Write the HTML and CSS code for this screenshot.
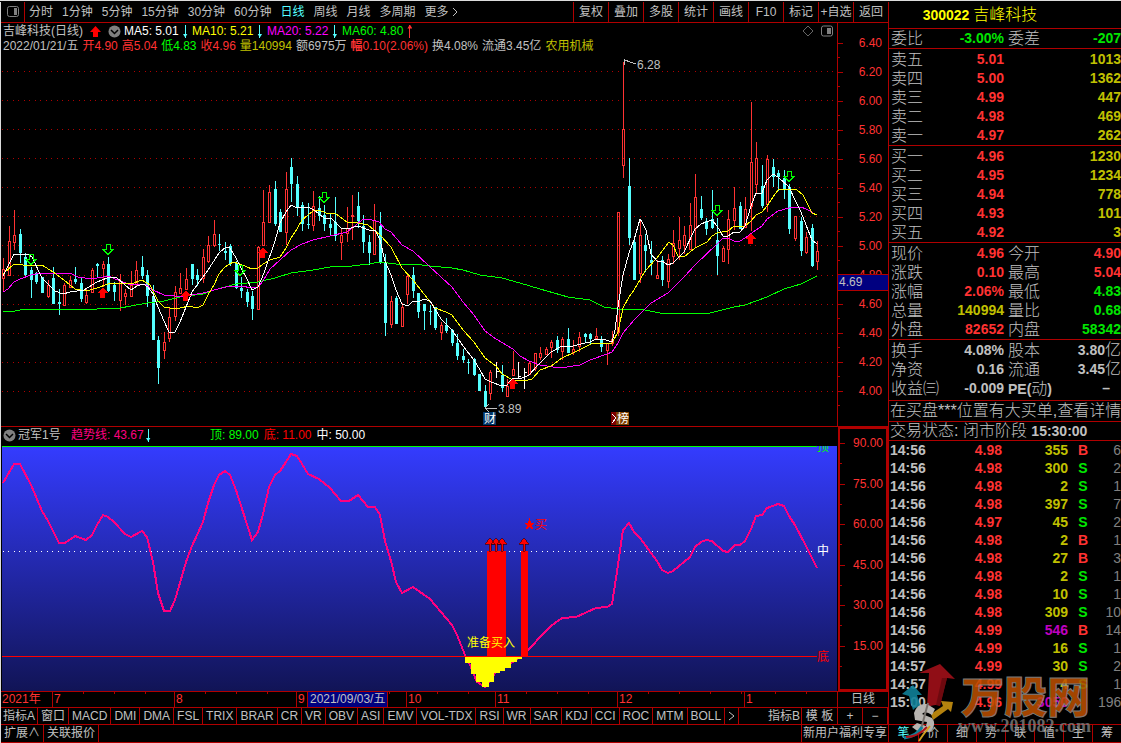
FILE: index.html
```
<!DOCTYPE html>
<html lang="zh-CN">
<head>
<meta charset="utf-8">
<title>300022 吉峰科技</title>
<link rel="stylesheet" href="styles.css">
</head>
<body>
<div class="app">
  <main class="workspace">
    <nav class="toolbar">
      <button class="toolbar-toggle" aria-label="侧栏"><svg width="12" height="12" viewBox="0 0 12 12"><rect x=".5" y=".5" width="11" height="10" rx="2" fill="none" stroke="#808080"/><rect x="7" y="2" width="3" height="7" fill="#808080"/></svg></button>
      <div class="periods">
        <button>分时</button><button>1分钟</button><button>5分钟</button><button>15分钟</button><button>30分钟</button><button>60分钟</button><button class="active">日线</button><button>周线</button><button>月线</button><button>多周期</button><button class="more">更多<svg width="6" height="10" viewBox="0 0 6 10"><path d="M1 1L5 5L1 9" fill="none" stroke="#c0c0c0"/></svg></button>
      </div>
      <div class="tools">
        <button>复权</button><button>叠加</button><button>多股</button><button>统计</button><button>画线</button><button>F10</button><button>标记</button><button>+自选</button><button>返回</button>
      </div>
    </nav>

    <section class="panel">
      <div class="plot">
        <header class="plot-head">
          <div class="ma-row">
            <span class="stock">吉峰科技(日线)</span>
            <svg class="up-mark" width="11" height="11" viewBox="0 0 11 11"><path d="M5.500 0L11 6H8V11H3V6H0Z" fill="#f00"/></svg>
            <svg class="fold" width="13" height="13" viewBox="0 0 13 13"><circle cx="6.500" cy="6.500" r="6" fill="#808080"/><path d="M3 5L6.500 8.500L10 5" fill="none" stroke="#000" stroke-width="1.500"/></svg>
            <span class="ma white">MA5: 5.01<i class="down"></i></span>
            <span class="ma yellow">MA10: 5.21<i class="down"></i></span>
            <span class="ma magenta">MA20: 5.22<i class="down"></i></span>
            <span class="ma lime">MA60: 4.80<i class="up"></i></span>
            <svg class="corner" width="32" height="12" viewBox="0 0 32 12"><path d="M6 1L11 6L6 11L1 6Z" fill="none" stroke="#666"/><rect x="19.500" y="1" width="11" height="10" rx="2" fill="none" stroke="#808080"/><rect x="25" y="3" width="4" height="6" fill="#808080"/></svg>
          </div>
          <div class="day-row">
            <span>2022/01/21/五</span><span class="red">开4.90</span><span class="red">高5.04</span><span class="lime">低4.83</span><span class="red">收4.96</span><span class="olive">量140994</span><span>额6975万</span><span class="red"><b>幅</b>0.10(2.06%)</span><span>换4.08%</span><span>流通3.45亿</span><span class="olive">农用机械</span>
          </div>
        </header>
        <svg class="chart" viewBox="1 54 836 372" role="img" aria-label="日K线">
          <g class="grid"><path d="M2 71.500H837M2 100.500H837M2 129.500H837M2 158.500H837M2 187.500H837M2 216.500H837M2 245.500H837M2 275.500H837M2 304.500H837M2 333.500H837M2 362.500H837M2 391.500H837"/></g>
          <g id="candles"></g>
          <polyline class="line" stroke="#00ff00" points="3,311 15,311 25,309 97,309 108,308 120,308 131,306 147,303 164,301 180,297 203,294 214,290 225,287 236,284 258,282 275,278 291,273 313,270 330,267 352,266 369,264 380,262 396,264 414,264 430,266 452,268 463,270 480,275 502,278 520,283 540,289 568,297 590,300 604,307 618,309 640,309 660,313 685,314 710,313 734,307 745,305 767,297 784,289 801,284 817,276"/>
          <polyline class="line" stroke="#ff00ff" points="3,292 8,289 14,282 20,279 31,275 42,273 53,274 70,273 78,277 92,279 108,276 120,281 131,285 145,284 153,290 164,295 175,296 186,296 203,293 214,290 230,286 241,286 252,288 258,287 263,281 270,269 280,260 291,250 302,244 313,240 330,236 347,232 355,226 362,220 369,219 379,222 385,229 391,232 402,245 413,251 429,266 441,277 452,287 463,302 474,315 485,331 496,339 513,349 520,356 529,361 540,365 560,368 580,365 590,360 607,354 612,352 618,343 623,333 634,320 651,303 668,293 684,277 695,265 717,244 723,238 728,238 734,241 740,241 745,238 756,230 762,226 767,219 778,211 789,208 801,207 806,209 817,215"/>
          <polyline class="line" stroke="#ffff00" points="3,274 14,264 31,266 42,265 53,272 64,280 75,289 86,291 97,288 108,284 120,283 131,284 142,280 150,285 158,301 164,307 170,308 180,308 189,306 197,308 203,305 208,295 214,285 219,274 225,267 233,262 240,264 247,267 252,269 258,268 263,264 270,260 280,257 286,248 291,238 297,229 302,220 313,211 319,210 326,213 336,214 347,222 358,223 368,225 380,235 391,247 402,268 413,280 424,294 435,308 446,312 452,315 463,330 474,342 485,358 496,366 502,374 513,380 524,381 532,379 540,370 551,366 562,358 573,353 585,347 593,343 612,343 618,332 623,308 629,297 634,290 640,280 645,271 657,258 669,242 673,245 678,256 684,257 695,248 707,242 712,236 717,233 728,231 734,226 745,226 751,221 756,215 762,212 767,206 773,197 778,190 784,189 797,190 803,195 808,205 812,213 817,215"/>
          <polyline class="line" stroke="#ffffff" points="3,276 14,254 28,254 32,257 42,278 55,291 63,294 70,292 84,290 97,282 107,278 116,277 125,285 131,290 137,286 143,284 148,287 153,294 158,307 164,321 169,332 175,332 180,322 186,307 192,292 200,281 208,270 219,253 226,247 230,248 236,258 241,268 247,279 252,290 258,287 264,273 275,241 280,223 286,212 291,205 297,208 308,207 314,210 324,218 332,219 341,228 347,229 358,226 369,230 375,230 380,240 385,261 391,275 396,290 402,304 408,306 413,301 418,302 424,299 430,301 435,309 441,319 452,330 463,346 474,360 480,370 485,379 491,382 502,386 507,385 513,378 522,378 529,375 537,366 542,361 551,352 562,346 573,346 585,343 590,342 596,339 606,340 612,342 615,330 619,300 623,275 629,253 634,240 640,219 642,222 646,230 651,254 657,261 662,261 668,265 673,263 684,252 695,229 701,224 706,222 712,220 717,226 723,236 728,236 734,232 740,232 745,226 751,206 756,193 762,193 767,180 773,174 778,177 789,187 795,200 801,212 806,225 812,240 817,244"/>
          <g id="signals"></g>
          <g class="mark"><path d="M624 60L636 64M624 59V65M624 60H628M485 408H497M489 404L485 408L489 412"/><text x="637" y="69">6.28</text><text x="498" y="413">3.89</text></g>
          <rect x="483" y="412" width="13" height="13" fill="#003468"/><text class="badge" x="484" y="423">财</text>
          <rect x="611" y="412" width="6" height="13" fill="#800000"/><path d="M612 414L616 418L612 423" fill="none" stroke="#fff"/><rect x="616" y="412" width="13" height="13" fill="#804000"/><text class="badge" x="617" y="423">榜</text>
        </svg>
      </div>
      <div class="axis price-axis">
        <ul><li>6.40</li><li>6.20</li><li>6.00</li><li>5.80</li><li>5.60</li><li>5.40</li><li>5.20</li><li>5.00</li><li>4.80</li><li>4.60</li><li>4.40</li><li>4.20</li><li>4.00</li></ul>
        <span class="cursor-price">4.69</span>
      </div>
    </section>

    <section class="panel">
      <div class="plot">
        <header class="ind-head">
          <svg class="fold" width="13" height="13" viewBox="0 0 13 13"><circle cx="6.500" cy="6.500" r="6" fill="#808080"/><path d="M3 5L6.500 8.500L10 5" fill="none" stroke="#000" stroke-width="1.500"/></svg>
          <span class="ind-name">冠军1号</span>
          <span class="ind-trend">趋势线: 43.67<i class="down"></i></span>
          <span class="lime">顶: 89.00</span><span class="pure-red">底: 11.00</span><span class="white">中: 50.00</span>
        </header>
        <svg class="chart" viewBox="1 446 836 245" role="img" aria-label="冠军1号">
          <defs><linearGradient id="sky" x1="0" y1="0" x2="0" y2="1"><stop offset="0" stop-color="#343cff"/><stop offset="1" stop-color="#111456"/></linearGradient></defs>
          <rect x="2" y="446" width="835" height="245" fill="url(#sky)"/>
          <path d="M2 446.500H817" stroke="#00ff00"/>
          <path class="mid" d="M3 551.500H817"/>
          <polyline class="trend" points="3,483 14,464 20,464 31,485 42,511 48,521 59,543 65,543 75,536 86,540 92,535 97,525 103,515 108,517 114,522 125,534 131,537 142,531 147,537 153,562 158,593 164,611 170,611 175,600 186,562 192,546 203,522 208,503 214,485 219,475 225,471 230,475 236,490 252,540 258,532 263,514 269,487 275,475 280,471 286,462 291,454 297,456 302,464 308,474 319,479 330,488 341,501 349,501 358,495 368,507 375,507 380,515 385,541 391,561 396,582 402,593 413,587 430,599 441,612 452,625 457,635 465,655 470,665 477,682 485,687 496,672 524,655 540,637 551,626 562,618 576,617 596,608 607,607 612,604 618,565 623,530 629,523 634,532 640,538 657,561 662,570 668,573 673,571 679,566 684,562 690,557 695,547 701,542 706,540 712,541 723,551 728,552 735,545 740,545 745,541 751,529 756,516 762,515 767,508 778,504 784,506 789,516 795,525 806,546 817,568"/>
          <path fill="#f00" d="M487 551H506V656H487ZM521 551H528V656H521Z"/>
          <path fill="#f00" stroke="#300" stroke-width=".6" d="M490 538L495 544H491V551H489V544H485ZM496 538L501 544H497V551H495V544H491ZM502 538L507 544H503V551H501V544H497ZM524 538L529 544H525V551H523V544H519Z"/>
          <path fill="#ff0" d="M465 656H522V659H517V662H511V668H505V671H500V673H494V682H489V687H482V682H476V674H471V663H465Z"/>
          <path d="M2 656.500H817" stroke="#f00"/>
          <path fill="#f00" d="M529.500 518L531 522.500H535.500L532 525.300L533.400 530L529.500 527.200L525.600 530L527 525.300L523.500 522.500H528Z"/>
          <text x="535" y="529" fill="#f00">买</text>
          <text x="467" y="647" fill="#ff0">准备买入</text>
          <text x="817" y="451" fill="#0f0">顶</text><text x="817" y="555" fill="#fff">中</text><text x="817" y="661" fill="#f00">底</text>
        </svg>
      </div>
      <div class="axis ind-axis">
        <ul><li>90.00</li><li>75.00</li><li>60.00</li><li>45.00</li><li>30.00</li><li>15.00</li></ul>
      </div>
    </section>

    <div class="dates">
      <div class="months"><span>2021年</span><span>7</span><span>8</span><span>9<time class="cursor-date">2021/09/03/五</time></span><span>10</span><span>11</span><span>12</span><span>1</span></div>
      <div class="period-name">日线</div>
    </div>

    <nav class="tabs">
      <button>指标A</button><button class="wide">窗口</button><button class="wide">MACD</button><button>DMI</button><button>DMA</button><button>FSL</button><button>TRIX</button><button>BRAR</button><button>CR</button><button>VR</button><button>OBV</button><button>ASI</button><button>EMV</button><button>VOL-TDX</button><button>RSI</button><button>WR</button><button>SAR</button><button>KDJ</button><button>CCI</button><button>ROC</button><button>MTM</button><button>BOLL</button><button aria-label="更多指标"><svg width="7" height="10" viewBox="0 0 7 10"><path d="M1 1L6 5L1 9" fill="none" stroke="#c0c0c0"/></svg></button><button class="push">指标B</button><button class="template">模 板</button><button class="zoom">+</button><button class="zoom">−</button>
    </nav>
    <nav class="links">
      <button>扩展∧</button><button class="related">关联报价</button><a href="#welfare">新用户福利专享</a>
    </nav>
  </main>

  <aside class="quote">
    <h1>300022 <span>吉峰科技</span></h1>
    <table class="block pairs commit"><tr><th>委比</th><td class="green">-3.00%</td><th>委差</th><td class="green">-207</td></tr></table>
    <table class="block book">
      <tr><th>卖五</th><td class="red">5.01</td><td class="olive">1013</td></tr>
      <tr><th>卖四</th><td class="red">5.00</td><td class="olive">1362</td></tr>
      <tr><th>卖三</th><td class="red">4.99</td><td class="olive">447</td></tr>
      <tr><th>卖二</th><td class="red">4.98</td><td class="olive">469</td></tr>
      <tr><th>卖一</th><td class="red">4.97</td><td class="olive">262</td></tr>
    </table>
    <table class="block book">
      <tr><th>买一</th><td class="red">4.96</td><td class="olive">1230</td></tr>
      <tr><th>买二</th><td class="red">4.95</td><td class="olive">1234</td></tr>
      <tr><th>买三</th><td class="red">4.94</td><td class="olive">778</td></tr>
      <tr><th>买四</th><td class="red">4.93</td><td class="olive">101</td></tr>
      <tr><th>买五</th><td class="red">4.92</td><td class="olive">3</td></tr>
    </table>
    <table class="block pairs">
      <tr><th>现价</th><td class="red">4.96</td><th>今开</th><td class="red">4.90</td></tr>
      <tr><th>涨跌</th><td class="red">0.10</td><th>最高</th><td class="red">5.04</td></tr>
      <tr><th>涨幅</th><td class="red">2.06%</td><th>最低</th><td class="green">4.83</td></tr>
      <tr><th>总量</th><td class="olive">140994</td><th>量比</th><td class="green">0.68</td></tr>
      <tr><th>外盘</th><td class="red">82652</td><th>内盘</th><td class="green">58342</td></tr>
    </table>
    <table class="block pairs basics">
      <tr><th>换手</th><td>4.08%</td><th>股本</th><td>3.80<span>亿</span></td></tr>
      <tr><th>净资</th><td>0.16</td><th>流通</th><td>3.45<span>亿</span></td></tr>
      <tr><th>收益㈢</th><td>-0.009</td><th><b>PE(</b>动<b>)</b></th><td class="none">–</td></tr>
    </table>
    <p class="notice">在买盘***位置有大买单,查看详情</p>
    <p class="status">交易状态: 闭市阶段 <b>15:30:00</b></p>
    <table class="ticks">
      <tr><td>14:56</td><td>4.98</td><td>355</td><td class="red">B</td><td>6</td></tr>
      <tr><td>14:56</td><td>4.98</td><td>300</td><td class="green">S</td><td>2</td></tr>
      <tr><td>14:56</td><td>4.98</td><td>2</td><td class="green">S</td><td>1</td></tr>
      <tr><td>14:56</td><td>4.98</td><td>397</td><td class="green">S</td><td>7</td></tr>
      <tr><td>14:56</td><td>4.97</td><td>45</td><td class="green">S</td><td>2</td></tr>
      <tr><td>14:56</td><td>4.98</td><td>2</td><td class="red">B</td><td>1</td></tr>
      <tr><td>14:56</td><td>4.98</td><td>27</td><td class="red">B</td><td>3</td></tr>
      <tr><td>14:56</td><td>4.98</td><td>2</td><td class="green">S</td><td>1</td></tr>
      <tr><td>14:56</td><td>4.98</td><td>10</td><td class="green">S</td><td>1</td></tr>
      <tr><td>14:56</td><td>4.98</td><td>309</td><td class="green">S</td><td>10</td></tr>
      <tr><td>14:56</td><td>4.99</td><td class="big">546</td><td class="red">B</td><td>14</td></tr>
      <tr><td>14:56</td><td>4.99</td><td>16</td><td class="green">S</td><td>1</td></tr>
      <tr><td>14:57</td><td>4.99</td><td>30</td><td class="green">S</td><td>2</td></tr>
      <tr><td>14:57</td><td>4.99</td><td>4</td><td class="green">S</td><td>1</td></tr>
      <tr><td>15:00</td><td>4.96</td><td class="big">3050</td><td></td><td>196</td></tr>
    </table>
    <nav class="side-tabs"><button class="active">笔</button><button>价</button><button>细</button><button>势</button><button>联</button><button>值</button><button>主</button><button>筹</button></nav>
    <svg class="watermark" width="220" height="80" viewBox="901 663 220 80" aria-hidden="true">
      <path fill="#a01018" d="M940 664L955 679L947 678L940 706Q934 703 927 708L929 673L919 673Z" opacity=".9"/>
      <path fill="#65090e" d="M947 678L940 706L936 705L942 678Z" opacity=".8"/>
      <path fill="#108098" d="M902 694L913 685L922 695L917 695L921 708Q916 706 913 710L909 696Z" opacity=".9"/>
      <path fill="#c89010" d="M941 701L953 702L951 712L948 709L933 720L931 714L943 706Z" opacity=".9"/>
      <path fill="#b8b4b0" d="M914 713Q917 703 927 704L935 709L932 715Q925 710 922 714L932 718Q937 724 931 731L920 733L912 727L917 723L926 726L927 722L915 720Z"/>
      <path d="M928 703L920 733" stroke="#77716c" stroke-width="2"/>
      <path d="M922 727Q917 736 904 738" stroke="#108098" stroke-width="3" fill="none"/>
      <path d="M927 727Q918 737 906 737" stroke="#b01018" stroke-width="2" fill="none"/>
      <path d="M930 726Q922 736 919 741" stroke="#d0a020" stroke-width="2" fill="none"/>
      <text class="wm-name" x="961" y="713">万股网</text>
      <text class="wm-site" x="958" y="732">www.201082.com</text>
    </svg>
  </aside>
</div>
<script src="chart.js"></script>
</body>
</html>
```
FILE: styles.css
```
* { box-sizing: border-box; }
:root { --line: #b00000; --gray: #c0c0c0; --red: #ff3232; --olive: #c0c000; --green: #00e600; }
body { margin: 0; background: #000; color: var(--gray); font: 12px/16px "Liberation Sans", "Noto Sans CJK SC", sans-serif; }
button { background: none; border: 0; margin: 0; padding: 0; color: inherit; font: inherit; white-space: nowrap; }
a { color: inherit; text-decoration: none; }
svg { display: block; }
ul { list-style: none; margin: 0; padding: 0; }
table { border-collapse: separate; border-spacing: 0; width: 100%; table-layout: fixed; }
th, td { padding: 0; white-space: nowrap; }

.app { display: grid; grid-template-columns: minmax(0, 1fr) 233px; min-height: 100vh; border-top: 1px solid #dcdcdc; padding-top: 1px; overflow: hidden; }
.workspace { display: flex; flex-direction: column; border-left: 1px solid #dcdcdc; min-width: 0; }

.red { color: var(--red); }
.pure-red { color: #f00; }
.green { color: var(--green); }
.lime { color: #0f0; }
.olive { color: var(--olive); }
.white { color: #fff; }
.yellow { color: #ff0; }
.magenta { color: #f0f; }

/* top toolbar */
.toolbar { display: flex; height: 21px; line-height: 20px; border-bottom: 1px solid var(--line); }
.toolbar-toggle { width: 24px; border-right: 1px solid var(--line); display: grid; place-items: center; }
.periods { display: flex; gap: 9px; padding-left: 4px; flex: 1; }
.periods .active { color: #5ff; }
.more { display: flex; align-items: center; gap: 3px; }
.tools { display: flex; }
.tools button { width: 35px; border-left: 1px solid var(--line); }

/* chart panels */
.panel { display: grid; grid-template-columns: minmax(0, 1fr) 51px; border-bottom: 1px solid var(--line); }
.plot { min-width: 0; }
.ma-row { display: flex; align-items: center; height: 16px; padding: 0 3px 0 2px; }
.up-mark { margin: 0 7px; flex: none; }
.fold { flex: none; }
.stock { white-space: nowrap; }
.ma { display: flex; align-items: center; gap: 4px; width: 75px; white-space: nowrap; }
.fold + .ma { margin-left: 3px; width: 68px; }
.corner { margin-left: auto; }
.down, .up { position: relative; width: 5px; height: 13px; flex: none; background: linear-gradient(#5ff, #5ff) center / 1px 100% no-repeat; }
.down::after, .up::after { content: ""; display: block; height: 4px; background: #5ff; }
.down::after { clip-path: polygon(0 0, 100% 0, 50% 100%); position: absolute; bottom: 0; width: 5px; }
.up { background-image: linear-gradient(var(--red), var(--red)); }
.up::after { background: var(--red); clip-path: polygon(50% 0, 100% 100%, 0 100%); }
.day-row { display: flex; gap: 4px; height: 15px; line-height: 15px; padding-left: 2px; white-space: nowrap; }
.chart { width: 100%; height: auto; shape-rendering: crispEdges; }
.grid path { stroke: #b00000; stroke-dasharray: 1 4 1 5; }
.line { fill: none; stroke-width: 1; }
.mark { fill: var(--gray); }
.mark path { fill: none; stroke: var(--gray); }
.badge { fill: #fff; }
.body-up { fill: none; stroke: var(--red); }
.wick-up { stroke: var(--red); }
.body-down { stroke: #5ff; stroke-width: 3; }
.wick-down { stroke: #5ff; }
.flat { stroke: #fff; }
.buy { fill: #f00; }
.sell { fill: none; stroke: #0f0; }
.mid { stroke: #fff; stroke-dasharray: 1 4 1 5; }
.trend { fill: none; stroke: #ff0080; stroke-width: 2; }

.axis { position: relative; color: var(--red); text-align: right; border-left: 1px solid var(--line); }
.axis ul { height: 100%; display: flex; flex-direction: column; }
.axis li { position: relative; }
.axis li::before, .axis li::after { content: ""; position: absolute; left: 0; height: 1px; background: var(--line); }
.axis li::before { top: 50%; width: 5px; }
.axis li::after { width: 2px; }
.price-axis ul { padding: 5px 6px 21px 0; }
.price-axis li { flex: 1; display: flex; align-items: center; justify-content: flex-end; }
.price-axis li::after { top: 100%; }
.cursor-price { position: absolute; left: 0; right: 0; top: 251px; height: 17px; line-height: 15px; background: #000080; border: solid var(--line); border-width: 1px 0; color: var(--gray); text-align: left; padding-left: 1px; }
.ind-axis { border: 2px solid var(--line); margin-left: 1px; }
.ind-axis ul { justify-content: space-between; padding: 6px 3px 35px 0; }
.ind-axis li::after { top: 28px; }

.ind-head { display: flex; align-items: center; height: 19px; padding: 0 2px 3px; white-space: nowrap; gap: 5px; }
.ind-name { width: 48px; }
.ind-trend { display: flex; align-items: center; gap: 2px; width: 134px; color: #ff0080; }
.fold + .ind-name { margin-left: -3px; }

/* date scale */
.dates { display: grid; grid-template-columns: minmax(0, 1fr) 51px; height: 16px; line-height: 15px; border-bottom: 1px solid var(--line); }
.months { display: grid; grid-template-columns: 51fr 122fr 122fr 110fr 89fr 122fr 127fr 93fr; color: var(--red); }
.months span { position: relative; padding-left: 1px; }
.months span + span { border-left: 1px solid var(--line); background: repeating-linear-gradient(90deg, transparent 0 30px, var(--line) 30px 31px) 0 0 / 100% 2px no-repeat; }
.cursor-date { position: absolute; left: 10px; top: 0; padding: 0 2px; background: #000080; color: var(--gray); border: solid var(--line); border-width: 0 1px; }
.period-name { border-left: 1px solid var(--line); text-align: center; }

/* bottom rows */
.tabs { display: flex; height: 17px; border-bottom: 1px solid var(--line); line-height: 15px; }
.tabs button { padding: 0 3px; border-right: 1px solid var(--line); }
.tabs .push { margin-left: auto; padding: 0 1px; }
.tabs button:first-child { padding: 0 2px; }
.tabs .template { width: 36px; padding: 0; }
.tabs .zoom { width: 25px; padding: 0; }
.links { display: flex; height: 18px; border-bottom: 1px solid var(--line); line-height: 17px; }
.links button { padding: 0 3px; border-right: 1px solid var(--line); }
.links a { margin-left: auto; border-left: 1px solid var(--line); padding: 0 1px; }

/* quote side panel */
.quote { position: relative; display: flex; flex-direction: column; border-left: 1px solid var(--line); font-size: 14px; line-height: 19px; }
.quote h1 { margin: 0; height: 27px; line-height: 26px; font-size: 14px; color: #ff0; text-align: center; padding-right: 50px; border-bottom: 1px solid var(--line); }
.quote h1 span { font-size: 16px; font-weight: 300; }
.quote th { font-size: 16px; font-weight: 300; text-align: left; padding-left: 2px; }
.quote td { font-weight: 700; text-align: right; }
.quote tr { height: 19px; }
.block { border-bottom: 1px solid var(--line); }
.block tr:first-child { height: 20px; }
.block td:nth-child(2) { width: 68px; }
.block th:first-child { width: 47px; }
.block.commit tr { height: 19px; }
.pairs th:nth-child(3) { width: 50px; padding-left: 4px; }
.basics td span { font-size: 16px; font-weight: 300; line-height: 0; }
.basics b { font-size: 14px; font-weight: 700; line-height: 0; }
.basics tr:last-child > * { padding-bottom: 2px; }
.basics .none { padding-right: 11px; }
.notice, .status { margin: 0; font-size: 16px; font-weight: 300; white-space: nowrap; border-bottom: 1px solid var(--line); padding-left: 1px; overflow: hidden; }
.notice { height: 21px; line-height: 20px; }
.status { height: 19px; line-height: 17px; }
.status b { font-size: 14px; font-weight: 700; line-height: 0; }
.ticks tr { height: 18px; }
.ticks td { line-height: 18px; color: var(--olive); }
.ticks td:nth-child(1) { width: 60px; text-align: left; padding-left: 1px; color: var(--gray); }
.ticks td:nth-child(2) { width: 53px; color: var(--red); }
.ticks td:nth-child(3) { width: 66px; }
.ticks td:nth-child(4) { width: 30px; text-align: center; }
.ticks td:nth-child(5) { color: #808080; font-weight: 400; }
.ticks .big { color: #c000c0; }
.ticks .red { color: var(--red); }
.ticks .green { color: var(--green); }
.side-tabs { margin-top: auto; height: 19px; display: grid; grid-template-columns: repeat(8, 1fr); border: solid var(--line); border-width: 1px 0; font-size: 12px; line-height: 17px; }
.side-tabs button + button { border-left: 1px solid var(--line); }
.side-tabs .active { color: #5ff; }
.watermark { position: absolute; right: 0; bottom: 0; }
.wm-name { font: 900 43px "Noto Sans CJK SC", sans-serif; fill: #c05000; stroke: #909090; stroke-width: 1; opacity: .85; }
.wm-site { font: 700 18px "Liberation Serif", serif; fill: #808080; opacity: .8; }
```
FILE: chart.js
```
// x, high, body top, body bottom, low, kind (r = rise, f = fall, w = flat)
const candles = `
3 258 269 278 292 r;9 226 241 275 275 r;14 210 235 242 250 r;20 229 234 253 263 f;25 253 257 275 277 f
31 267 270 280 298 f;36 272 273 282 284 f;42 277 277 293 293 f;48 280 285 296 298 r;53 267 278 304 304 f
59 289 302 304 315 f;64 283 285 305 305 r;70 276 280 287 288 r;75 267 279 282 284 f;81 278 283 299 302 f
86 289 295 302 304 r;92 268 270 292 292 r;97 263 264 266 278 f;103 261 264 268 287 r;108 257 264 291 292 f
114 282 285 292 301 f;120 274 281 300 311 r;125 289 293 296 305 r;131 271 285 296 296 r;136 261 270 284 286 r
142 256 267 276 279 f;147 270 275 296 307 f;153 285 296 340 340 f;158 336 340 368 384 f;164 332 342 350 359 r
169 308 317 338 342 r;175 286 292 316 321 r;180 273 288 293 293 r;186 268 279 289 289 r;192 264 264 279 285 f
197 269 275 280 286 f;203 249 257 278 283 r;208 236 245 261 263 r;214 220 234 245 247 r;219 234 244 245 251 f
225 242 251 253 260 f;230 244 246 264 266 f;236 261 263 288 289 f;241 277 288 291 298 f;247 289 292 302 307 f
252 291 296 309 320 f;258 246 247 309 309 r;263 190 222 245 246 r;269 185 192 222 223 r;275 181 189 224 226 f
280 209 212 232 232 f;286 172 189 232 245 r;291 158 167 184 202 f;297 176 184 208 216 f;302 202 205 224 231 f
308 203 224 225 229 f;313 191 206 225 231 r;319 196 208 216 221 f;324 205 215 224 231 f;330 213 224 228 236 f
335 197 222 236 241 f;341 229 235 242 260 r;347 207 228 233 242 r;352 195 215 216 240 r;358 192 206 221 228 f
363 215 226 242 253 f;369 235 242 253 265 f;374 204 220 254 254 r;380 212 226 263 264 f;385 254 263 323 336 f
391 296 301 324 328 r;396 296 298 324 324 f;402 303 307 326 326 r;407 274 276 294 304 r;413 267 275 291 298 f
418 293 293 312 318 f;424 304 304 311 330 f;430 305 311 312 325 f;435 307 307 328 330 f;441 322 325 332 340 r
446 318 325 331 333 f;452 329 330 343 346 f;457 334 343 356 360 f;463 349 356 360 363 f;468 359 362 363 374 f
474 358 359 375 376 f;479 374 374 391 391 f;485 385 391 407 407 f;490 370 372 393 400 r;496 362 371 372 378 w
502 365 375 388 392 f;507 379 386 396 396 r;513 351 369 375 376 r;518 362 376 377 378 w;524 368 372 373 389 w
529 362 363 374 375 r;535 353 353 368 371 r;540 347 353 357 360 r;546 347 349 354 355 r;551 340 342 347 358 r
557 336 340 350 353 f;562 337 339 351 360 r;568 328 339 353 353 f;573 340 349 352 355 r;579 332 337 346 352 r
585 333 334 337 342 f;590 333 334 339 344 f;596 328 336 338 339 r;601 336 339 347 352 f;607 343 343 350 365 r
612 331 339 343 346 r;618 212 212 332 336 r;623 62 129 165 178 r;629 158 186 238 245 f;634 240 242 280 280 f
640 220 235 273 283 r;645 234 245 251 272 f;651 241 260 263 275 f;657 260 275 278 279 r;662 256 260 280 286 f
668 254 259 281 288 r;673 230 243 256 264 r;679 217 240 248 260 r;684 226 235 245 254 r;690 203 225 249 249 r
695 174 197 228 247 r;701 196 209 218 220 f;706 218 221 229 235 f;712 190 219 228 229 f;717 218 240 256 275 f
723 246 248 261 262 r;728 210 219 249 264 r;734 187 208 220 230 r;740 202 206 229 229 f;745 197 209 227 228 r
751 102 162 206 231 r;756 142 158 184 193 r;762 165 186 206 208 f;767 155 159 204 212 r;773 159 167 177 187 f
778 170 173 177 191 f;784 170 178 189 199 f;789 184 187 229 234 f;795 216 216 238 241 r;801 217 221 251 256 f
806 232 237 252 254 r;812 224 228 266 267 f;817 241 251 261 270 r`;

const path = { "wick-up": "", "body-up": "", "wick-down": "", "body-down": "", flat: "" };
for (const row of candles.trim().split(/[;\n]/)) {
  const [x, high, top, bottom, low, kind] = row.split(" ").map((v, i) => (i < 5 ? Number(v) : v));
  const c = x + 0.5;
  if (kind === "r") {
    path["wick-up"] += `M${c} ${high}V${top}M${c} ${bottom}V${low}`;
    path["body-up"] += `M${c - 1} ${top + 0.5}h2v${bottom - top}h-2z`;
  } else if (kind === "f") {
    path["wick-down"] += `M${c} ${high}V${low}`;
    path["body-down"] += `M${c} ${top}V${bottom}`;
  } else {
    path.flat += `M${c} ${high}V${low}M${c - 1} ${top + 0.5}h3`;
  }
}
document.getElementById("candles").innerHTML =
  Object.entries(path).map(([name, d]) => `<path class="${name}" d="${d}"/>`).join("");

const sells = [[31, 254], [108, 244], [240, 265], [324, 192], [717, 205], [789, 171]];
const buys = [[103, 287], [186, 290], [263, 247], [513, 378], [751, 233]];
document.getElementById("signals").innerHTML =
  sells.map(([x, y]) => `<path class="sell" d="M${x - 2} ${y + 0.5}h4v5h3l-5 5l-5 -5h3z"/>`).join("") +
  buys.map(([x, y]) => `<path class="buy" d="M${x} ${y}l5 6h-3v5h-5v-5h-3z"/>`).join("");
```
